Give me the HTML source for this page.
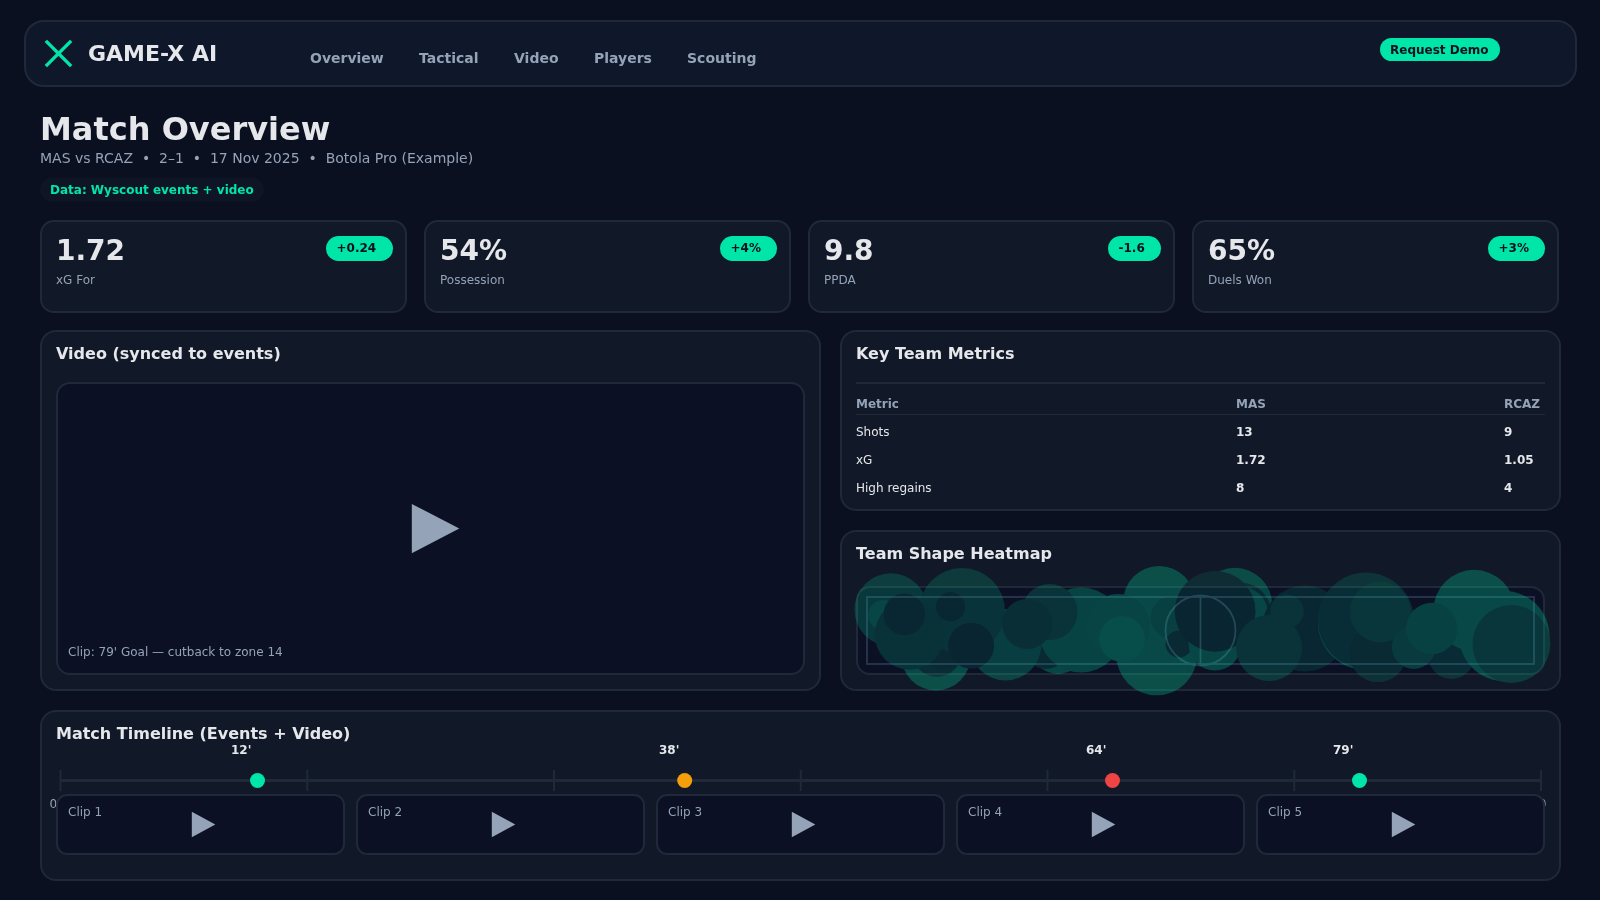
<!DOCTYPE html>
<html lang="en">
<head>
<meta charset="utf-8">
<title>GAME-X AI</title>
<style>
*{box-sizing:border-box;margin:0;padding:0}
html,body{width:1600px;height:900px;overflow:hidden}
body{background:#0b1020;will-change:transform;color:#e5e7eb;font-family:"DejaVu Sans","Liberation Sans",sans-serif;position:relative}
.abs{position:absolute}
.card{position:absolute;background:#111827;border:2px solid #1f2937;border-radius:16px}
.kpi{border-radius:14px}
.nav{position:absolute;left:24px;top:20px;width:1553px;height:67px;background:#0f172a;border:2px solid #1f2937;border-radius:20px}
.brand{position:absolute;left:88px;top:39px;font-weight:700;font-size:22px;line-height:30px;color:#e5e7eb;white-space:nowrap}
.navlink{position:absolute;top:48px;font-weight:700;font-size:14px;line-height:20px;color:#94a3b8;white-space:nowrap}
.btn{position:absolute;left:1380px;top:38px;width:120px;height:23px;border-radius:12px;background:#00e5a8;color:#0b1020;font-weight:700;font-size:12px;line-height:25px;text-align:left;padding-left:10px}
h1{position:absolute;left:40px;top:109px;font-size:32px;line-height:40px;font-weight:700;color:#e5e7eb;white-space:nowrap}
.sub{position:absolute;left:40px;top:148px;font-size:14px;line-height:20px;color:#94a3b8;white-space:nowrap}
.tag{position:absolute;left:40px;top:178px;height:23px;padding:0 10px;border-radius:12px;background:#0d1527;color:#00e5a8;font-weight:700;font-size:12px;line-height:24px;white-space:nowrap}
.kpi .v{position:absolute;left:14px;top:11px;font-size:28px;line-height:36px;font-weight:700;color:#e5e7eb}
.kpi .l{position:absolute;left:14px;top:50px;font-size:12px;line-height:16px;color:#94a3b8}
.kpi .d{position:absolute;top:14px;height:25px;border-radius:13px;background:#00e5a8;color:#0b1020;font-weight:700;font-size:12px;line-height:25px;text-align:left;padding-left:10.5px}
.ttl{position:absolute;left:14px;top:11px;font-size:16px;line-height:22px;font-weight:700;color:#e5e7eb;white-space:nowrap}
.inner{position:absolute;background:#0b1024;border:2px solid #1f2937;border-radius:14px}
.play{position:absolute;width:0;height:0;border-style:solid;border-color:transparent transparent transparent #94a3b8}
.small{font-size:12px;line-height:16px;color:#94a3b8;white-space:nowrap;position:absolute}
.th{position:absolute;font-size:12px;line-height:16px;font-weight:700;color:#94a3b8;white-space:nowrap}
.td{position:absolute;font-size:12px;line-height:16px;color:#e5e7eb;white-space:nowrap}
.td.b{font-weight:700}
.hr{position:absolute;left:14px;width:689px;background:#1f2937}
.clip{position:absolute;top:82px;width:289px;height:61px;background:#0b1024;border:2px solid #1f2937;border-radius:11px}
.clip .small{left:10px;top:8px}
.clip .play{left:134px;top:17px;border-width:12.5px 0 12.5px 23px}
.tl{position:absolute;font-size:12px;line-height:16px;font-weight:700;color:#e5e7eb;white-space:nowrap}
</style>
</head>
<body>
<div class="nav"></div>
<svg class="abs" style="left:40px;top:35px" width="38" height="38" viewBox="0 0 38 38"><path d="M5.85 5.85L31.15 31.15M31.15 5.85L5.85 31.15" stroke="#00e5a8" stroke-width="3.4" stroke-linecap="butt" fill="none"/></svg>
<div class="brand">GAME-X AI</div>
<div class="navlink" style="left:310px">Overview</div>
<div class="navlink" style="left:419px">Tactical</div>
<div class="navlink" style="left:514px">Video</div>
<div class="navlink" style="left:594px">Players</div>
<div class="navlink" style="left:687px">Scouting</div>
<div class="btn">Request Demo</div>

<h1>Match Overview</h1>
<div class="sub">MAS vs RCAZ &nbsp;•&nbsp; 2–1 &nbsp;•&nbsp; 17 Nov 2025 &nbsp;•&nbsp; Botola Pro (Example)</div>
<div class="tag">Data: Wyscout events + video</div>

<div class="card kpi" style="left:40px;top:220px;width:367px;height:93px"><div class="v">1.72</div><div class="l">xG For</div><div class="d" style="left:284px;width:67px">+0.24</div></div>
<div class="card kpi" style="left:424px;top:220px;width:367px;height:93px"><div class="v">54%</div><div class="l">Possession</div><div class="d" style="left:294px;width:57px">+4%</div></div>
<div class="card kpi" style="left:808px;top:220px;width:367px;height:93px"><div class="v">9.8</div><div class="l">PPDA</div><div class="d" style="left:298px;width:53px">-1.6</div></div>
<div class="card kpi" style="left:1192px;top:220px;width:367px;height:93px"><div class="v">65%</div><div class="l">Duels Won</div><div class="d" style="left:294px;width:57px">+3%</div></div>

<div class="card" style="left:40px;top:330px;width:781px;height:361px">
  <div class="ttl">Video (synced to events)</div>
  <div class="inner" style="left:14px;top:50px;width:749px;height:293px">
    <svg class="abs" style="left:350px;top:116px" width="60" height="60" viewBox="0 0 60 60"><polygon points="3.8,3.9 51.3,28.5 3.8,53.2" fill="#94a3b8"/></svg>
    <div class="small" style="left:10px;top:260px">Clip: 79' Goal — cutback to zone 14</div>
  </div>
</div>

<div class="card" style="left:840px;top:330px;width:721px;height:181px">
  <div class="ttl">Key Team Metrics</div>
  <div class="hr" style="top:50px;height:2px"></div>
  <div class="th" style="left:14px;top:64px">Metric</div><div class="th" style="left:394px;top:64px">MAS</div><div class="th" style="left:662px;top:64px">RCAZ</div>
  <div class="hr" style="top:82px;height:1px"></div>
  <div class="td" style="left:14px;top:92px">Shots</div><div class="td b" style="left:394px;top:92px">13</div><div class="td b" style="left:662px;top:92px">9</div>
  <div class="td" style="left:14px;top:120px">xG</div><div class="td b" style="left:394px;top:120px">1.72</div><div class="td b" style="left:662px;top:120px">1.05</div>
  <div class="td" style="left:14px;top:148px">High regains</div><div class="td b" style="left:394px;top:148px">8</div><div class="td b" style="left:662px;top:148px">4</div>
</div>

<!--HEAT-->
<svg class="abs" style="left:830px;top:520px" width="770" height="190" viewBox="830 520 770 190">
<defs>
<g id="hb"><rect x="830" y="520" width="770" height="190" fill="#0b1020"/><rect x="841" y="531" width="719" height="159" rx="15" fill="#111827" stroke="#1f2937" stroke-width="2"/><rect x="857" y="587" width="687" height="87" rx="13" fill="#0b1024" stroke="#1f2937" stroke-width="2"/><g fill="none" stroke="#27374f" stroke-width="1.8"><rect x="867" y="597" width="667" height="67"/><line x1="1200.5" y1="597" x2="1200.5" y2="664"/><circle cx="1200.5" cy="630.5" r="35"/></g></g>
<mask id="kH" maskUnits="userSpaceOnUse" x="830" y="520" width="770" height="190"><circle cx="936.0" cy="656.0" r="34.5" fill="#fff"/></mask>
<mask id="kI2" maskUnits="userSpaceOnUse" x="830" y="520" width="770" height="190"><circle cx="937.0" cy="651.7" r="25.0" fill="#fff"/></mask>
<mask id="kI1" maskUnits="userSpaceOnUse" x="830" y="520" width="770" height="190"><circle cx="944.0" cy="651.0" r="19.0" fill="#fff"/></mask>
<mask id="kM2" maskUnits="userSpaceOnUse" x="830" y="520" width="770" height="190"><circle cx="1058.0" cy="646.0" r="28.0" fill="#fff"/></mask>
<mask id="kN2" maskUnits="userSpaceOnUse" x="830" y="520" width="770" height="190"><circle cx="1046.0" cy="647.0" r="22.0" fill="#fff"/></mask>
<mask id="kJ" maskUnits="userSpaceOnUse" x="830" y="520" width="770" height="190"><circle cx="1005.5" cy="644.8" r="35.8" fill="#fff"/></mask>
<mask id="kA" maskUnits="userSpaceOnUse" x="830" y="520" width="770" height="190"><circle cx="890.9" cy="609.8" r="36.5" fill="#fff"/></mask>
<mask id="kC" maskUnits="userSpaceOnUse" x="830" y="520" width="770" height="190"><circle cx="883.0" cy="615.0" r="15.0" fill="#fff"/></mask>
<mask id="kB" maskUnits="userSpaceOnUse" x="830" y="520" width="770" height="190"><circle cx="962.0" cy="611.0" r="43.0" fill="#fff"/></mask>
<mask id="kE" maskUnits="userSpaceOnUse" x="830" y="520" width="770" height="190"><circle cx="909.8" cy="634.7" r="35.0" fill="#fff"/></mask>
<mask id="kD" maskUnits="userSpaceOnUse" x="830" y="520" width="770" height="190"><circle cx="904.3" cy="614.3" r="20.7" fill="#fff"/></mask>
<mask id="kF" maskUnits="userSpaceOnUse" x="830" y="520" width="770" height="190"><circle cx="950.5" cy="606.7" r="14.6" fill="#fff"/></mask>
<mask id="kG" maskUnits="userSpaceOnUse" x="830" y="520" width="770" height="190"><circle cx="971.1" cy="645.8" r="23.0" fill="#fff"/></mask>
<mask id="kM" maskUnits="userSpaceOnUse" x="830" y="520" width="770" height="190"><circle cx="1081.0" cy="630.0" r="42.5" fill="#fff"/></mask>
<mask id="kL" maskUnits="userSpaceOnUse" x="830" y="520" width="770" height="190"><circle cx="1049.6" cy="612.1" r="28.0" fill="#fff"/></mask>
<mask id="kK" maskUnits="userSpaceOnUse" x="830" y="520" width="770" height="190"><circle cx="1027.2" cy="623.9" r="25.0" fill="#fff"/></mask>
<mask id="kP1" maskUnits="userSpaceOnUse" x="830" y="520" width="770" height="190"><circle cx="1159.1" cy="602.0" r="36.0" fill="#fff"/></mask>
<mask id="kP2" maskUnits="userSpaceOnUse" x="830" y="520" width="770" height="190"><circle cx="1156.7" cy="654.9" r="40.4" fill="#fff"/></mask>
<mask id="kM3" maskUnits="userSpaceOnUse" x="830" y="520" width="770" height="190"><circle cx="1118.0" cy="626.0" r="32.0" fill="#fff"/></mask>
<mask id="kO" maskUnits="userSpaceOnUse" x="830" y="520" width="770" height="190"><circle cx="1122.0" cy="639.0" r="23.0" fill="#fff"/></mask>
<mask id="kR" maskUnits="userSpaceOnUse" x="830" y="520" width="770" height="190"><circle cx="1171.5" cy="617.5" r="21.0" fill="#fff"/></mask>
<mask id="kS" maskUnits="userSpaceOnUse" x="830" y="520" width="770" height="190"><circle cx="1179.0" cy="644.0" r="13.5" fill="#fff"/></mask>
<mask id="kW" maskUnits="userSpaceOnUse" x="830" y="520" width="770" height="190"><circle cx="1215.0" cy="644.0" r="26.4" fill="#fff"/></mask>
<mask id="kT" maskUnits="userSpaceOnUse" x="830" y="520" width="770" height="190"><circle cx="1234.9" cy="605.1" r="37.3" fill="#fff"/></mask>
<mask id="kU" maskUnits="userSpaceOnUse" x="830" y="520" width="770" height="190"><circle cx="1241.0" cy="613.0" r="30.2" fill="#fff"/></mask>
<mask id="kT2" maskUnits="userSpaceOnUse" x="830" y="520" width="770" height="190"><circle cx="1240.0" cy="614.5" r="28.2" fill="#fff"/></mask>
<mask id="kQ" maskUnits="userSpaceOnUse" x="830" y="520" width="770" height="190"><circle cx="1215.1" cy="611.3" r="40.4" fill="#fff"/></mask>
<mask id="kY" maskUnits="userSpaceOnUse" x="830" y="520" width="770" height="190"><circle cx="1304.9" cy="628.4" r="43.0" fill="#fff"/></mask>
<mask id="kX" maskUnits="userSpaceOnUse" x="830" y="520" width="770" height="190"><circle cx="1287.0" cy="611.3" r="16.8" fill="#fff"/></mask>
<mask id="kV" maskUnits="userSpaceOnUse" x="830" y="520" width="770" height="190"><circle cx="1269.1" cy="647.9" r="33.0" fill="#fff"/></mask>
<mask id="kZ0" maskUnits="userSpaceOnUse" x="830" y="520" width="770" height="190"><circle cx="1365.5" cy="622.2" r="47.6" fill="#fff"/></mask>
<mask id="kZ" maskUnits="userSpaceOnUse" x="830" y="520" width="770" height="190"><circle cx="1366.0" cy="620.5" r="48.0" fill="#fff"/></mask>
<mask id="kAB" maskUnits="userSpaceOnUse" x="830" y="520" width="770" height="190"><circle cx="1378.0" cy="653.3" r="28.8" fill="#fff"/></mask>
<mask id="kAA" maskUnits="userSpaceOnUse" x="830" y="520" width="770" height="190"><circle cx="1380.3" cy="612.1" r="30.3" fill="#fff"/></mask>
<mask id="kAI" maskUnits="userSpaceOnUse" x="830" y="520" width="770" height="190"><circle cx="1451.5" cy="655.6" r="23.3" fill="#fff"/></mask>
<mask id="kAC" maskUnits="userSpaceOnUse" x="830" y="520" width="770" height="190"><circle cx="1413.7" cy="647.1" r="21.8" fill="#fff"/></mask>
<mask id="kAE" maskUnits="userSpaceOnUse" x="830" y="520" width="770" height="190"><circle cx="1474.1" cy="610.5" r="40.7" fill="#fff"/></mask>
<mask id="kAD" maskUnits="userSpaceOnUse" x="830" y="520" width="770" height="190"><circle cx="1431.8" cy="628.4" r="25.7" fill="#fff"/></mask>
<mask id="kAG" maskUnits="userSpaceOnUse" x="830" y="520" width="770" height="190"><circle cx="1504.4" cy="636.2" r="45.1" fill="#fff"/></mask>
<mask id="kAH" maskUnits="userSpaceOnUse" x="830" y="520" width="770" height="190"><circle cx="1511.4" cy="644.0" r="38.9" fill="#fff"/></mask>
</defs>
<use href="#hb"/>
<g mask="url(#kH)"><use href="#hb"/><rect x="830" y="520" width="770" height="190" fill="#00e5a8" fill-opacity="0.270"/></g>
<g mask="url(#kI2)"><use href="#hb"/><rect x="830" y="520" width="770" height="190" fill="#00e5a8" fill-opacity="0.140"/></g>
<g mask="url(#kI1)"><use href="#hb"/><rect x="830" y="520" width="770" height="190" fill="#00e5a8" fill-opacity="0.115"/></g>
<g mask="url(#kM2)"><use href="#hb"/><rect x="830" y="520" width="770" height="190" fill="#00e5a8" fill-opacity="0.260"/></g>
<g mask="url(#kN2)"><use href="#hb"/><rect x="830" y="520" width="770" height="190" fill="#00e5a8" fill-opacity="0.120"/></g>
<g mask="url(#kJ)"><use href="#hb"/><rect x="830" y="520" width="770" height="190" fill="#00e5a8" fill-opacity="0.220"/></g>
<g mask="url(#kA)"><use href="#hb"/><rect x="830" y="520" width="770" height="190" fill="#00e5a8" fill-opacity="0.185"/></g>
<g mask="url(#kC)"><use href="#hb"/><rect x="830" y="520" width="770" height="190" fill="#00e5a8" fill-opacity="0.250"/></g>
<g mask="url(#kB)"><use href="#hb"/><rect x="830" y="520" width="770" height="190" fill="#00e5a8" fill-opacity="0.165"/></g>
<g mask="url(#kE)"><use href="#hb"/><rect x="830" y="520" width="770" height="190" fill="#00e5a8" fill-opacity="0.155"/></g>
<g mask="url(#kD)"><use href="#hb"/><rect x="830" y="520" width="770" height="190" fill="#00e5a8" fill-opacity="0.110"/></g>
<g mask="url(#kF)"><use href="#hb"/><rect x="830" y="520" width="770" height="190" fill="#00e5a8" fill-opacity="0.110"/></g>
<g mask="url(#kG)"><use href="#hb"/><rect x="830" y="520" width="770" height="190" fill="#00e5a8" fill-opacity="0.100"/></g>
<g mask="url(#kM)"><use href="#hb"/><rect x="830" y="520" width="770" height="190" fill="#00e5a8" fill-opacity="0.240"/></g>
<g mask="url(#kL)"><use href="#hb"/><rect x="830" y="520" width="770" height="190" fill="#00e5a8" fill-opacity="0.160"/></g>
<g mask="url(#kK)"><use href="#hb"/><rect x="830" y="520" width="770" height="190" fill="#00e5a8" fill-opacity="0.145"/></g>
<g mask="url(#kP1)"><use href="#hb"/><rect x="830" y="520" width="770" height="190" fill="#00e5a8" fill-opacity="0.270"/></g>
<g mask="url(#kP2)"><use href="#hb"/><rect x="830" y="520" width="770" height="190" fill="#00e5a8" fill-opacity="0.270"/></g>
<g mask="url(#kM3)"><use href="#hb"/><rect x="830" y="520" width="770" height="190" fill="#00e5a8" fill-opacity="0.245"/></g>
<g mask="url(#kO)"><use href="#hb"/><rect x="830" y="520" width="770" height="190" fill="#00e5a8" fill-opacity="0.290"/></g>
<g mask="url(#kR)"><use href="#hb"/><rect x="830" y="520" width="770" height="190" fill="#00e5a8" fill-opacity="0.225"/></g>
<g mask="url(#kS)"><use href="#hb"/><rect x="830" y="520" width="770" height="190" fill="#00e5a8" fill-opacity="0.120"/></g>
<g mask="url(#kW)"><use href="#hb"/><rect x="830" y="520" width="770" height="190" fill="#00e5a8" fill-opacity="0.250"/></g>
<g mask="url(#kT)"><use href="#hb"/><rect x="830" y="520" width="770" height="190" fill="#00e5a8" fill-opacity="0.260"/></g>
<g mask="url(#kU)"><use href="#hb"/><rect x="830" y="520" width="770" height="190" fill="#00e5a8" fill-opacity="0.120"/></g>
<g mask="url(#kT2)"><use href="#hb"/><rect x="830" y="520" width="770" height="190" fill="#00e5a8" fill-opacity="0.255"/></g>
<g mask="url(#kQ)"><use href="#hb"/><rect x="830" y="520" width="770" height="190" fill="#00e5a8" fill-opacity="0.100"/></g>
<g mask="url(#kY)"><use href="#hb"/><rect x="830" y="520" width="770" height="190" fill="#00e5a8" fill-opacity="0.110"/></g>
<g mask="url(#kX)"><use href="#hb"/><rect x="830" y="520" width="770" height="190" fill="#00e5a8" fill-opacity="0.160"/></g>
<g mask="url(#kV)"><use href="#hb"/><rect x="830" y="520" width="770" height="190" fill="#00e5a8" fill-opacity="0.160"/></g>
<g mask="url(#kZ0)"><use href="#hb"/><rect x="830" y="520" width="770" height="190" fill="#00e5a8" fill-opacity="0.270"/></g>
<g mask="url(#kZ)"><use href="#hb"/><rect x="830" y="520" width="770" height="190" fill="#00e5a8" fill-opacity="0.140"/></g>
<g mask="url(#kAB)"><use href="#hb"/><rect x="830" y="520" width="770" height="190" fill="#00e5a8" fill-opacity="0.120"/></g>
<g mask="url(#kAA)"><use href="#hb"/><rect x="830" y="520" width="770" height="190" fill="#00e5a8" fill-opacity="0.180"/></g>
<g mask="url(#kAI)"><use href="#hb"/><rect x="830" y="520" width="770" height="190" fill="#00e5a8" fill-opacity="0.130"/></g>
<g mask="url(#kAC)"><use href="#hb"/><rect x="830" y="520" width="770" height="190" fill="#00e5a8" fill-opacity="0.200"/></g>
<g mask="url(#kAE)"><use href="#hb"/><rect x="830" y="520" width="770" height="190" fill="#00e5a8" fill-opacity="0.265"/></g>
<g mask="url(#kAD)"><use href="#hb"/><rect x="830" y="520" width="770" height="190" fill="#00e5a8" fill-opacity="0.230"/></g>
<g mask="url(#kAG)"><use href="#hb"/><rect x="830" y="520" width="770" height="190" fill="#00e5a8" fill-opacity="0.265"/></g>
<g mask="url(#kAH)"><use href="#hb"/><rect x="830" y="520" width="770" height="190" fill="#00e5a8" fill-opacity="0.180"/></g>
<text x="856" y="559" font-family="DejaVu Sans, Liberation Sans, sans-serif" font-size="16" font-weight="700" fill="#e5e7eb">Team Shape Heatmap</text>
</svg>
<!--/HEAT-->

<div class="card" style="left:40px;top:710px;width:1521px;height:171px">
  <div class="ttl">Match Timeline (Events + Video)</div>
  <svg class="abs" style="left:0;top:0" width="1517" height="120" viewBox="0 0 1517 120">
    <line x1="18.5" y1="68.5" x2="1499" y2="68.5" stroke="#1f2937" stroke-width="3"/>
    <line x1="18.50" y1="58" x2="18.50" y2="79" stroke="#1f2937" stroke-width="2"/><line x1="265.25" y1="58" x2="265.25" y2="79" stroke="#1f2937" stroke-width="2"/><line x1="512.00" y1="58" x2="512.00" y2="79" stroke="#1f2937" stroke-width="2"/><line x1="758.75" y1="58" x2="758.75" y2="79" stroke="#1f2937" stroke-width="2"/><line x1="1005.50" y1="58" x2="1005.50" y2="79" stroke="#1f2937" stroke-width="2"/><line x1="1252.25" y1="58" x2="1252.25" y2="79" stroke="#1f2937" stroke-width="2"/><line x1="1499.00" y1="58" x2="1499.00" y2="79" stroke="#1f2937" stroke-width="2"/>
    <circle cx="215.5" cy="68.5" r="7.5" fill="#00e5a8"/>
    <circle cx="642.7" cy="68.5" r="7.5" fill="#f59e0b"/>
    <circle cx="1070.5" cy="68.5" r="7.5" fill="#ef4444"/>
    <circle cx="1317.5" cy="68.5" r="7.5" fill="#00e5a8"/>
  </svg>
  <div class="tl" style="left:189px;top:30px">12'</div>
  <div class="tl" style="left:617px;top:30px">38'</div>
  <div class="tl" style="left:1044px;top:30px">64'</div>
  <div class="tl" style="left:1291px;top:30px">79'</div>
  <div class="small" style="left:7.5px;top:84px">0</div>
  <div class="small" style="left:1489px;top:84px">90</div>
  <div class="clip" style="left:14px"><div class="small">Clip 1</div><svg class="abs" style="left:130px;top:12px" width="32" height="34" viewBox="0 0 32 34"><polygon points="3.8,3.8 27.3,16.5 3.8,29.3" fill="#94a3b8"/></svg></div>
  <div class="clip" style="left:314px"><div class="small">Clip 2</div><svg class="abs" style="left:130px;top:12px" width="32" height="34" viewBox="0 0 32 34"><polygon points="3.8,3.8 27.3,16.5 3.8,29.3" fill="#94a3b8"/></svg></div>
  <div class="clip" style="left:614px"><div class="small">Clip 3</div><svg class="abs" style="left:130px;top:12px" width="32" height="34" viewBox="0 0 32 34"><polygon points="3.8,3.8 27.3,16.5 3.8,29.3" fill="#94a3b8"/></svg></div>
  <div class="clip" style="left:914px"><div class="small">Clip 4</div><svg class="abs" style="left:130px;top:12px" width="32" height="34" viewBox="0 0 32 34"><polygon points="3.8,3.8 27.3,16.5 3.8,29.3" fill="#94a3b8"/></svg></div>
  <div class="clip" style="left:1214px"><div class="small">Clip 5</div><svg class="abs" style="left:130px;top:12px" width="32" height="34" viewBox="0 0 32 34"><polygon points="3.8,3.8 27.3,16.5 3.8,29.3" fill="#94a3b8"/></svg></div>
</div>
</body>
</html>
